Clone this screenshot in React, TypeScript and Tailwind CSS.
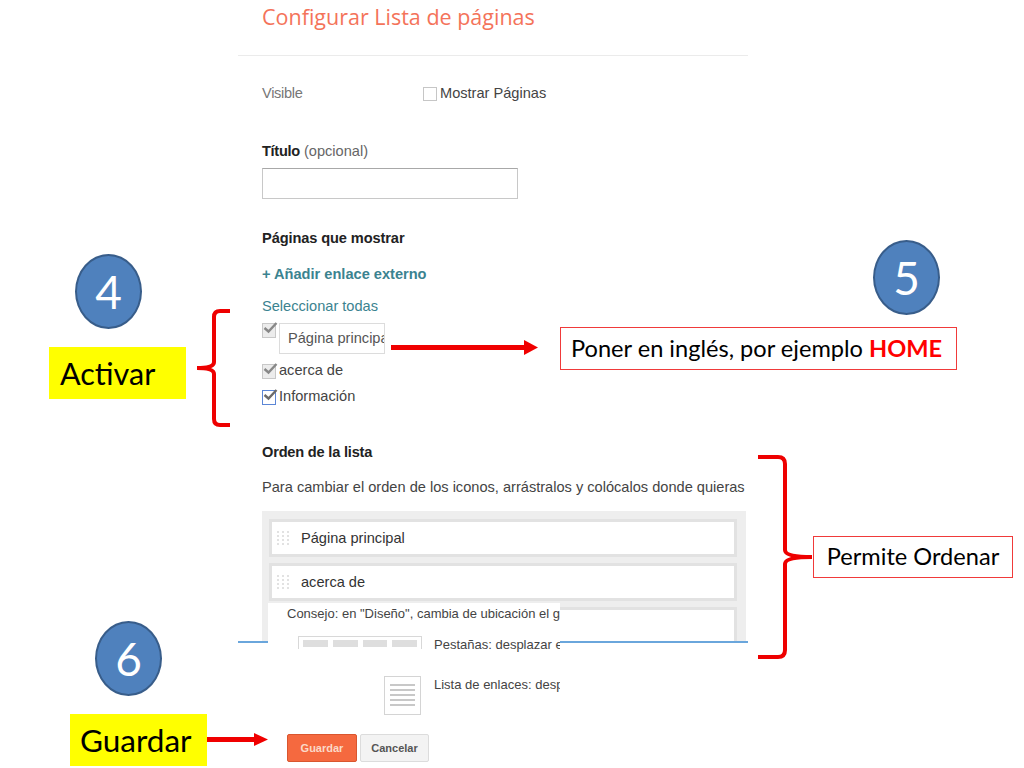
const arial = "font-['Liberation_Sans',Arial,sans-serif]";
const calibri = "font-['Lato','Liberation_Sans',sans-serif]";

function Check({ blue = false }: { blue?: boolean }) {
  return (
    <span className={`relative block w-[14px] h-[15px] border ${blue ? "border-[#5b86d6] bg-white" : "border-[#c8c8c8] bg-[#ececec]"}`}>
      <svg viewBox="0 0 16 16" className="absolute -left-[1px] -top-[4px] w-[16px] h-[16px]">
        <path d="M2.5 8 L6.5 11.5 L14.5 3" fill="none" stroke={blue ? "#6b6b6b" : "#888"} strokeWidth="2.4" />
      </svg>
    </span>
  );
}

function Grip() {
  return (
    <span className="grid grid-cols-3 gap-x-[2px] gap-y-[2px] w-[13px] shrink-0">
      {Array.from({ length: 12 }).map((_, i) => (
        <span key={i} className="w-[2px] h-[2px] bg-[#e2e2e2]" />
      ))}
    </span>
  );
}

function ListItem({ label }: { label: string }) {
  return (
    <div className="h-[38px] bg-white border-[3px] border-[#e2e2e2] flex items-center pl-[5px] gap-[11px] text-[14.6px] text-[#333]">
      <Grip />
      <span className="mt-[2px]">{label}</span>
    </div>
  );
}

function Circle({ n, x, y }: { n: string; x: string; y: string }) {
  return (
    <div className={`absolute ${x} ${y} w-[67px] h-[75px] rounded-[50%] bg-[#4f81bd] border-2 border-[#385d8a] flex items-center justify-center text-white text-[46px] ${calibri}`}>
      {n}
    </div>
  );
}

export default function App() {
  return (
    <div className={`relative w-[1024px] h-[768px] overflow-hidden bg-white ${arial}`}>
      {/* form column */}
      <div className="ml-[238px] w-[510px] h-[641px] overflow-hidden border-b-2 border-b-[#6aa6dc] box-content">
        <div className="h-[56px] border-b border-[#ebebeb] pl-[24px] pt-[3px]">
          <h1 className="font-['Open_Sans',sans-serif] text-[21.5px] leading-[28px] text-[#f4735a]">Configurar Lista de páginas</h1>
        </div>
        <div className="pl-[24px] text-[14.6px]">
          <div className="mt-[28px] h-[20px] flex items-center">
            <span className="w-[161px] text-[#777] tracking-[-0.3px]">Visible</span>
            <span className="w-[14px] h-[14px] border border-[#c6c6c6] bg-white" />
            <span className="ml-[3px] text-[#444]">Mostrar Páginas</span>
          </div>
          <div className="mt-[37px] h-[20px] leading-[20px]">
            <span className="font-bold text-[#222] tracking-[-0.3px]">Título</span>
            <span className="text-[#666]"> (opcional)</span>
          </div>
          <div className="mt-[7px] w-[256px] h-[31px] border border-[#c8c8c8] border-t-[#a8a8a8] bg-white" />
          <div className="mt-[29px] h-[20px] leading-[20px] font-bold text-[#222] tracking-[-0.1px]">Páginas que mostrar</div>
          <div className="mt-[16px] h-[20px] leading-[20px] font-bold text-[#3b8390]">+ Añadir enlace externo</div>
          <div className="mt-[12px] h-[20px] leading-[20px] text-[#3b8390]">Seleccionar todas</div>
          <div className="mt-[7px] flex items-start gap-[3px] h-[31px]">
            <Check />
            <div className="w-[106px] h-[31px] border border-[#dcdcdc] pl-[8px] leading-[29px] text-[#555] overflow-hidden whitespace-nowrap">Página principal</div>
          </div>
          <div className="mt-[8px] flex items-center gap-[3px] h-[18px] text-[#444]"><Check /><span>acerca de</span></div>
          <div className="mt-[8px] flex items-center gap-[3px] h-[18px] text-[#444]"><Check blue /><span>Información</span></div>
          <div className="mt-[36px] h-[20px] leading-[20px] font-bold text-[#222] tracking-[-0.2px]">Orden de la lista</div>
          <div className="mt-[15px] h-[20px] leading-[20px] text-[#444] whitespace-nowrap">Para cambiar el orden de los iconos, arrástralos y colócalos donde quieras</div>
          <div className="mt-[14px] w-[484px] h-[140px] bg-[#eeeeee] pt-[8px] pl-[7px] pr-[9px] flex flex-col gap-[6px]">
            <ListItem label="Página principal" />
            <ListItem label="acerca de" />
            <ListItem label="" />
          </div>
        </div>
      </div>

      {/* tip overlay */}
      <div className="absolute left-[268px] top-[603px] w-[292px] h-[120px] bg-white overflow-hidden text-[13px] text-[#444] whitespace-nowrap">
        <div className="absolute left-[19px] top-[1px]">Consejo: en "Diseño", cambia de ubicación el gadget</div>
        <div className="absolute left-[30px] top-[33px] w-[124px] h-[13px] border-x border-t border-[#d8d8d8] flex gap-[5px] px-[4px] pt-[3px]">
          {[0, 1, 2, 3].map((i) => <span key={i} className="flex-1 h-[7px] bg-[#dedede]" />)}
        </div>
        <div className="absolute left-[166px] top-[32px]">Pestañas: desplazar el gadget</div>
        <div className="absolute left-[116px] top-[73px] w-[37px] h-[39px] border border-[#d4d4d4] flex flex-col gap-[3px] px-[5px] pt-[7px]">
          {[0, 1, 2, 3, 4].map((i) => <span key={i} className="h-[2px] bg-[#c8c8c8]" />)}
        </div>
        <div className="absolute left-[166px] top-[72px]">Lista de enlaces: desplazar</div>
      </div>

      {/* buttons */}
      <div className="absolute left-[287px] top-[734px] flex gap-[3px] text-[11px] font-bold">
        <button className="w-[70px] h-[28px] rounded-[2px] bg-[#f5693f] border border-[#d9562f] text-[#fbd9c8]">Guardar</button>
        <button className="w-[69px] h-[28px] rounded-[2px] bg-[#f3f3f3] border border-[#dcdcdc] text-[#555]">Cancelar</button>
      </div>

      {/* annotations */}
      <Circle n="4" x="left-[75px]" y="top-[254px]" />
      <Circle n="5" x="left-[873px]" y="top-[240px]" />
      <Circle n="6" x="left-[95px]" y="top-[621px]" />

      <div className={`absolute left-[49px] top-[347px] w-[137px] h-[52px] bg-[#ffff00] pl-[11px] leading-[52px] text-[30.5px] text-black ${calibri}`}>Activar</div>
      <div className={`absolute left-[70px] top-[714px] w-[137px] h-[52px] bg-[#ffff00] pl-[10px] leading-[52px] text-[31.5px] text-black ${calibri}`}>Guardar</div>

      <div className={`absolute left-[560px] top-[327px] w-[397px] h-[43px] border border-[#f03a3a] pl-[10px] leading-[41px] text-[23.6px] text-black whitespace-nowrap ${calibri}`}>
        Poner en inglés, por ejemplo <span className="font-bold text-[#ff0000]">HOME</span>
      </div>
      <div className={`absolute left-[813px] top-[536px] w-[200px] h-[42px] border border-[#f03a3a] flex items-center justify-center text-[23.6px] text-black whitespace-nowrap ${calibri}`}>
        Permite Ordenar
      </div>

      {/* brackets and arrows */}
      <svg className="absolute left-0 top-0 w-[1024px] h-[768px] pointer-events-none" viewBox="0 0 1024 768">
        <g fill="none" stroke="#ee0000" strokeWidth="4">
          <path d="M230 311 H220 Q214 311 214 317 V362 Q214 368 197 368 Q214 368 214 374 V419 Q214 425 220 425 H230" />
          <path d="M758 457 H778 Q785 457 785 464 V550 Q785 557 812 557 Q785 557 785 564 V650 Q785 657 778 657 H758" />
        </g>
        <g fill="#f00000">
          <rect x="391" y="345" width="136" height="5" />
          <path d="M524 340 L538 347.5 L524 355 Z" />
          <rect x="207" y="737" width="48" height="5" />
          <path d="M254 733 L268 739.5 L254 746 Z" />
        </g>
      </svg>
    </div>
  );
}
